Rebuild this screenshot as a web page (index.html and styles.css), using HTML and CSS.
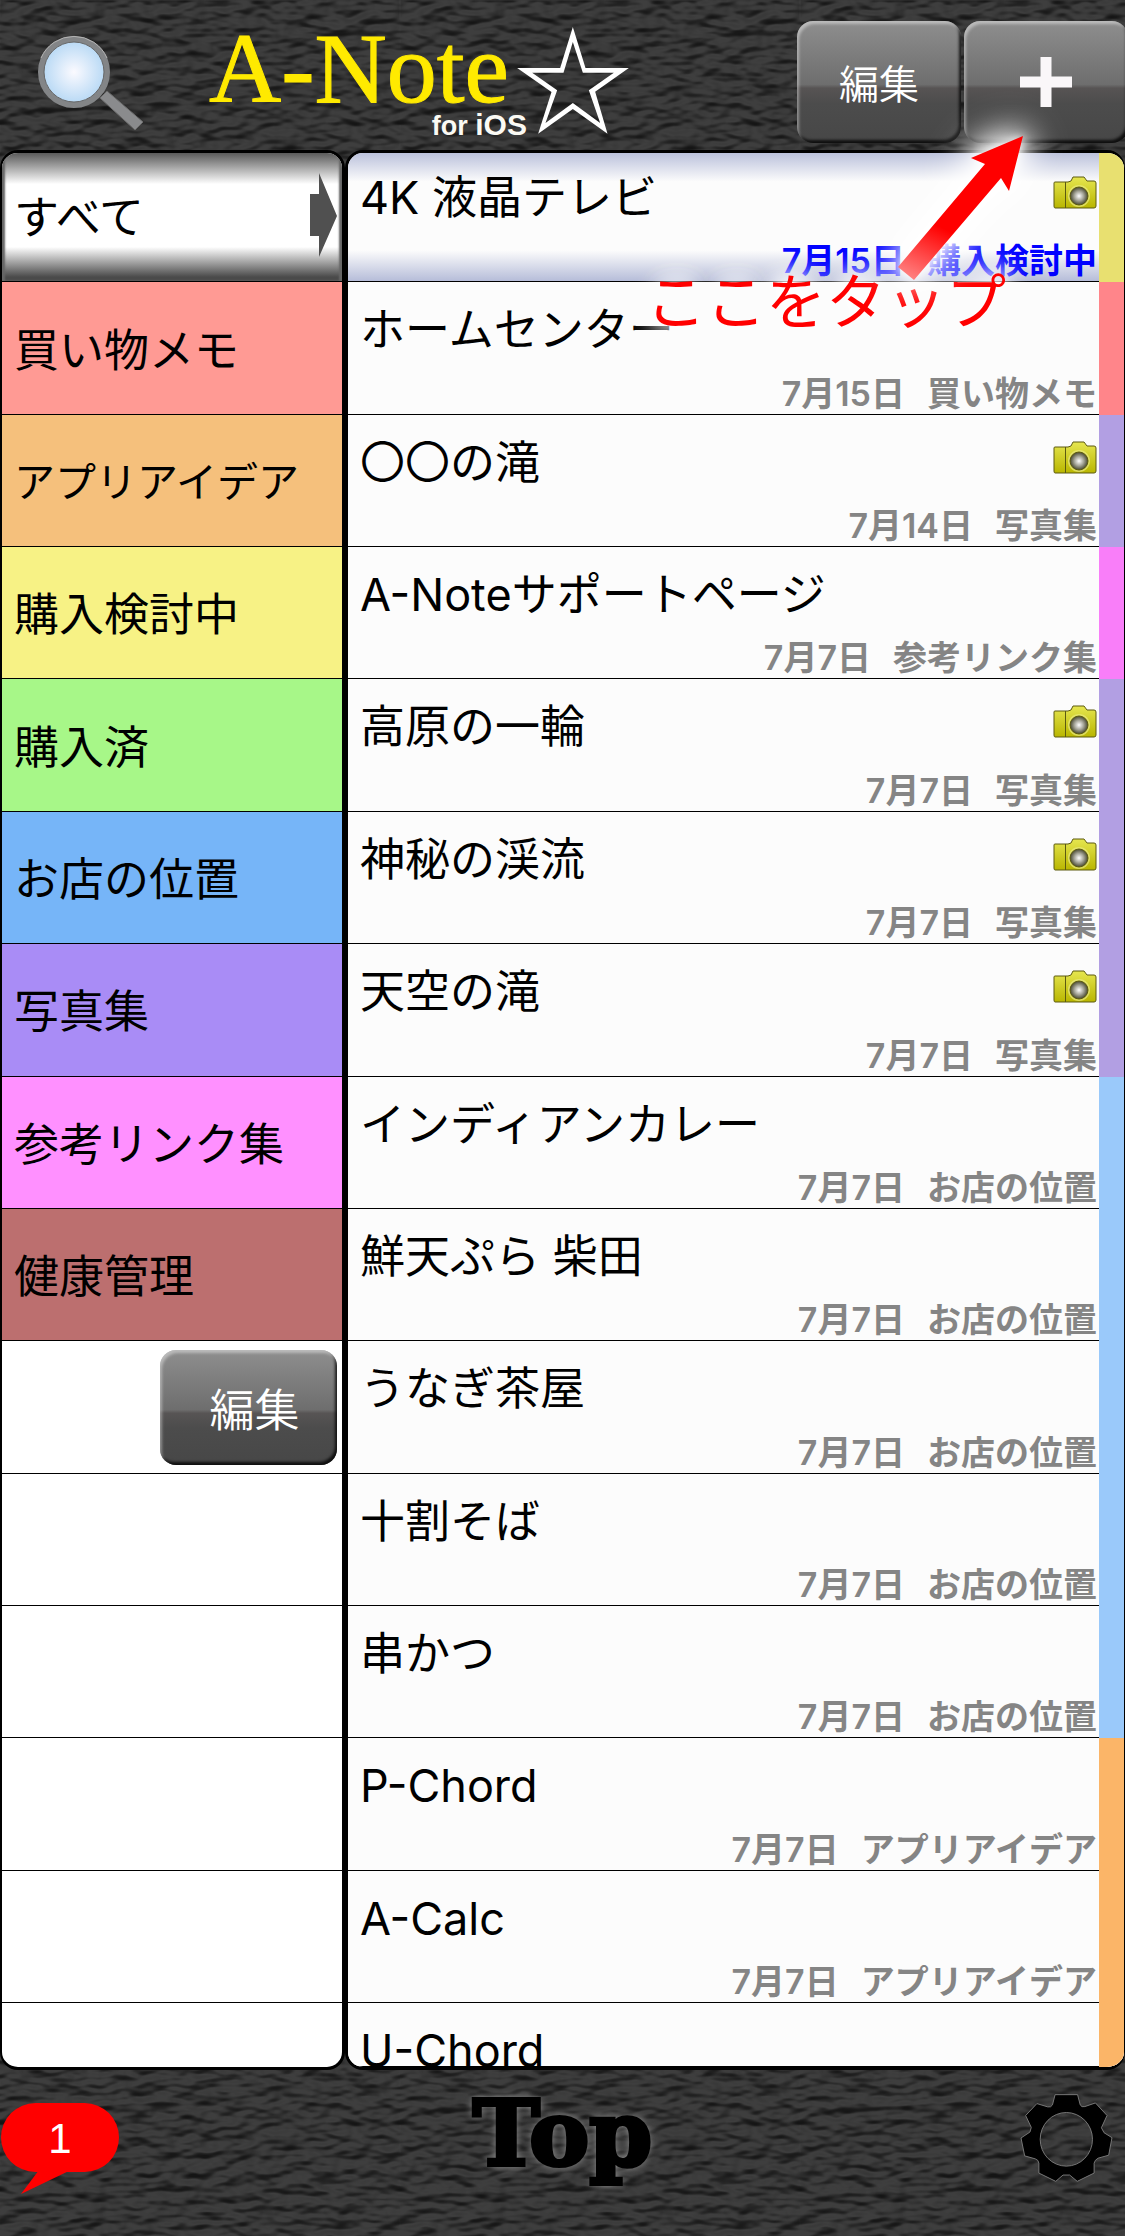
FILE: index.html
```html
<!DOCTYPE html>
<html lang="ja">
<head>
    <meta charset="UTF-8">
    <meta name="viewport" content="width=device-width, initial-scale=1.0">
    <title>A-Note for iOS</title>
    <link rel="stylesheet" href="styles.css">
</head>
<body>
    <svg class="defs" width="0" height="0" aria-hidden="true">
        <defs>
            <linearGradient id="cam-body" x1="0" y1="0" x2="0" y2="1">
                <stop offset="0" stop-color="#e6e650"/>
                <stop offset="1" stop-color="#b9b600"/>
            </linearGradient>
            <radialGradient id="cam-lens">
                <stop offset="0" stop-color="#fff"/>
                <stop offset="0.5" stop-color="#a8a89c"/>
                <stop offset="1" stop-color="#45452c"/>
            </radialGradient>
            <symbol id="camera" viewBox="0 0 44 33">
                <path d="M2 6h13l3-1 2-4h11l3 4h7q2 0 2 2v23q0 2-2 2H2q-1 0-1-2V7q0-1 1-1z" fill="url(#cam-body)" stroke="#5c5a10" stroke-width="1"/>
                <path d="M12.500 6v26" stroke="#5c5a10" stroke-width="1"/>
                <circle cx="26" cy="20" r="11" fill="#e9e980" opacity=".7"/>
                <circle cx="26" cy="20" r="9" fill="url(#cam-lens)" stroke="#5c5a10" stroke-width="1"/>
            </symbol>
        </defs>
    </svg>

    <header class="header">
        <button class="search-button" aria-label="検索">
            <svg width="110" height="100" viewBox="0 0 110 100">
                <defs>
                    <radialGradient id="glass">
                        <stop offset="0" stop-color="#fbfaff"/>
                        <stop offset="1" stop-color="#b4d7f4"/>
                    </radialGradient>
                </defs>
                <path d="M66 64l7-7 36 31-8 8z" fill="#8a8b8d" stroke="#6a6a6a" stroke-width="1"/>
                <circle cx="40" cy="38" r="33" fill="url(#glass)" stroke="#838587" stroke-width="6"/>
                <path d="M7 24a36 36 0 0 1 66 0" fill="none" stroke="#b4b4b4" stroke-width="1"/>
                <circle cx="40" cy="38" r="30" fill="none" stroke="#666" stroke-width="1"/>
            </svg>
        </button>
        <h1 class="logo">
            <span class="logo-text">
                <span class="logo-name">A-Note</span>
                <span class="logo-sub">for <b>iOS</b></span>
            </span>
            <svg class="star" width="112" height="107" viewBox="427 80 335 321" aria-hidden="true">
                <path fill="#fff" fill-rule="evenodd" d="M594 80L632 203H762L661 274L698 400L594 326L490 400L530 275L427 203H556ZM594 125L624 217H717L642 270L676 368L594 308L512 368L547 270L472 217H566Z"/>
            </svg>
        </h1>
        <div class="header-buttons">
            <button class="btn">編集</button>
            <button class="btn btn-add" aria-label="新規メモ">
                <svg width="52" height="50" viewBox="0 0 52 50"><path d="M0 25h52M26 0v50" stroke="#faf7f9" stroke-width="11"/></svg>
            </button>
        </div>
        <div class="guide">
            <svg class="guide-arrow" width="132" height="150" viewBox="894 132 132 150" aria-hidden="true">
                <defs>
                    <linearGradient id="arrow-fade" gradientUnits="userSpaceOnUse" x1="930" y1="222" x2="905" y2="275">
                        <stop offset="0" stop-color="#f00"/>
                        <stop offset="1" stop-color="#ff8080"/>
                    </linearGradient>
                </defs>
                <path d="M1023 136L971 158L985 164L898 267L914 280L1001 178L1009 191Z" fill="url(#arrow-fade)"/>
            </svg>
            <p class="guide-text">ここをタップ</p>
        </div>
    </header>

    <main class="panels">
        <nav class="panel categories">
            <a href="#" class="row all">すべて
                <svg class="pointer" width="27" height="84" viewBox="0 0 27 84" aria-hidden="true"><path d="M0 21h9V0l18 43L9 84V63H0z" fill="#505050"/></svg>
            </a>
            <a href="#" class="row red">買い物メモ</a>
            <a href="#" class="row orange long">アプリアイデア</a>
            <a href="#" class="row yellow">購入検討中</a>
            <a href="#" class="row green">購入済</a>
            <a href="#" class="row blue">お店の位置</a>
            <a href="#" class="row purple">写真集</a>
            <a href="#" class="row pink">参考リンク集</a>
            <a href="#" class="row brown">健康管理</a>
            <div class="row edit-row"><button class="btn">編集</button></div>
            <div class="row"></div>
            <div class="row"></div>
            <div class="row"></div>
            <div class="row"></div>
            <div class="row"></div>
        </nav>

        <section class="panel notes">
            <a href="#" class="row selected tag-yellow">
                <span class="title">4K 液晶テレビ</span><svg class="camera"><use href="#camera"/></svg>
                <span class="meta"><span>7月15日</span><span>購入検討中</span></span>
            </a>
            <a href="#" class="row tag-red">
                <span class="title">ホームセンター</span>
                <span class="meta"><span>7月15日</span><span>買い物メモ</span></span>
            </a>
            <a href="#" class="row tag-purple">
                <span class="title">〇〇の滝</span><svg class="camera"><use href="#camera"/></svg>
                <span class="meta"><span>7月14日</span><span>写真集</span></span>
            </a>
            <a href="#" class="row tag-pink">
                <span class="title">A-Noteサポートページ</span>
                <span class="meta"><span>7月7日</span><span>参考リンク集</span></span>
            </a>
            <a href="#" class="row tag-purple">
                <span class="title">高原の一輪</span><svg class="camera"><use href="#camera"/></svg>
                <span class="meta"><span>7月7日</span><span>写真集</span></span>
            </a>
            <a href="#" class="row tag-purple">
                <span class="title">神秘の渓流</span><svg class="camera"><use href="#camera"/></svg>
                <span class="meta"><span>7月7日</span><span>写真集</span></span>
            </a>
            <a href="#" class="row tag-purple">
                <span class="title">天空の滝</span><svg class="camera"><use href="#camera"/></svg>
                <span class="meta"><span>7月7日</span><span>写真集</span></span>
            </a>
            <a href="#" class="row tag-blue">
                <span class="title">インディアンカレー</span>
                <span class="meta"><span>7月7日</span><span>お店の位置</span></span>
            </a>
            <a href="#" class="row tag-blue">
                <span class="title">鮮天ぷら 柴田</span>
                <span class="meta"><span>7月7日</span><span>お店の位置</span></span>
            </a>
            <a href="#" class="row tag-blue">
                <span class="title">うなぎ茶屋</span>
                <span class="meta"><span>7月7日</span><span>お店の位置</span></span>
            </a>
            <a href="#" class="row tag-blue">
                <span class="title">十割そば</span>
                <span class="meta"><span>7月7日</span><span>お店の位置</span></span>
            </a>
            <a href="#" class="row tag-blue">
                <span class="title">串かつ</span>
                <span class="meta"><span>7月7日</span><span>お店の位置</span></span>
            </a>
            <a href="#" class="row tag-orange">
                <span class="title">P-Chord</span>
                <span class="meta"><span>7月7日</span><span>アプリアイデア</span></span>
            </a>
            <a href="#" class="row tag-orange">
                <span class="title">A-Calc</span>
                <span class="meta"><span>7月7日</span><span>アプリアイデア</span></span>
            </a>
            <a href="#" class="row tag-orange">
                <span class="title">U-Chord</span>
            </a>
        </section>
    </main>

    <footer class="footer">
        <a href="#" class="bubble">1</a>
        <a href="#" class="top-link">Top</a>
        <button class="settings" aria-label="設定">
            <svg width="93" height="90" viewBox="812 340 281 272">
                <path fill="#000" fill-rule="evenodd" stroke="#777" stroke-width="3" d="M918 345H986L994 376Q998 384 1008 381L1040 370L1075 408L1058 445L1066 460L1090 475L1080 528L1048 537Q1038 542 1036 552V582L985 607L962 588H942L920 607L869 582V552Q868 542 858 539L826 530L815 476L842 458L846 444L829 408L863 372L896 382Q906 384 910 376ZM952 399A79 81 0 1 0 952 561A79 81 0 1 0 952 399Z"/>
            </svg>
        </button>
    </footer>
</body>
</html>
```
FILE: styles.css
```css
* { box-sizing: border-box; }

body {
    margin: 0;
    min-height: 100vh;
    display: flex;
    flex-direction: column;
    font-family: Inter, "Noto Sans CJK JP", sans-serif;
    font-size: 45px;
    color: #000;
    background-color: #333;
    background-image: url("data:image/svg+xml,%3Csvg xmlns='http://www.w3.org/2000/svg' width='400' height='400'%3E%3Cfilter id='n' x='0' y='0' width='100%25' height='100%25' color-interpolation-filters='sRGB'%3E%3CfeTurbulence type='fractalNoise' baseFrequency='.04 .09' numOctaves='2' seed='4' stitchTiles='stitch'/%3E%3CfeDiffuseLighting surfaceScale='9' lighting-color='%23444444'%3E%3CfeDistantLight azimuth='260' elevation='58'/%3E%3C/feDiffuseLighting%3E%3C/filter%3E%3Crect width='400' height='400' fill='%23353535'/%3E%3Crect width='400' height='400' filter='url(%23n)' opacity='.6'/%3E%3C/svg%3E");
}

a { color: inherit; text-decoration: none; }
button { font-family: inherit; cursor: pointer; }
.defs { position: absolute; }

/* header */
.header {
    position: relative;
    height: 150px;
    display: flex;
    align-items: flex-start;
}
.search-button, .settings {
    padding: 0;
    border: 0;
    background: none;
}
.search-button { margin: 34px 0 0 34px; }
.search-button svg, .settings svg { display: block; }

.logo {
    display: flex;
    align-items: flex-start;
    margin: 0 0 0 65px;
    font-weight: normal;
}
.logo-text { display: flex; flex-direction: column; }
.logo-name {
    font-family: "Liberation Serif", serif;
    font-size: 100px;
    line-height: 100px;
    margin-top: 19px;
    color: #ffea00;
    -webkit-text-stroke: 1px #ffea00;
}
.logo-sub {
    margin: -10px -18px 0 0;
    text-align: right;
    font: bold 27px/32px "Liberation Sans", sans-serif;
    color: #fbfaf4;
}
.logo-sub b { font-size: 30px; }
.star { margin: 27px 0 0 8px; }

.header-buttons {
    display: flex;
    gap: 3px;
    margin: 21px -3px 0 auto;
}
.btn {
    width: 164px;
    height: 122px;
    padding: 0;
    border: 0;
    border-radius: 16px;
    font-size: 40px;
    font-weight: 350;
    color: #fff;
    background: linear-gradient(#8e8e8e, #6e6e6e 52%, #575454 55%, #4c4c4c 68%, #474747);
    box-shadow: inset 2px 3px 3px rgba(255, 255, 255, .4), inset -2px -3px 3px rgba(0, 0, 0, .8);
}
.btn-add svg { display: block; margin: 0 auto; }

/* "tap here" callout over the list */
.guide {
    position: absolute;
    z-index: 2;
    top: 132px;
    right: 99px;
    pointer-events: none;
}
.guide-arrow {
    display: block;
    margin-left: auto;
    overflow: visible;
    filter: drop-shadow(0 0 5px #fff) drop-shadow(0 0 16px #fff) drop-shadow(0 0 16px #fff);
}
.guide-text {
    margin: -20px 20px 0 0;
    font-size: 60px;
    line-height: 80px;
    font-weight: 400;
    color: #f00;
    text-shadow: 0 0 16px #fff, 0 0 24px #fff, 0 0 30px #fff, 0 0 30px #fff, 0 0 36px #fff;
}

/* lists */
.panels {
    flex: 1;
    display: grid;
    grid-template-columns: 345px 1fr;
}
.panel {
    display: flex;
    flex-direction: column;
    overflow: hidden;
    border: 3px solid #000;
    border-radius: 18px;
    background: #fff;
}
.categories { border-left-width: 2px; }
.notes { border-right-width: 1px; background: #fcfcfc; }

.row {
    flex: 1 0 0;
    min-height: 120px;
    border-bottom: 1px solid #000;
}
.row:first-child { margin-top: -3px; }
.row:last-child {
    flex: 0 0 64px;
    min-height: 0;
    border-bottom: 0;
    overflow: hidden;
}

.categories .row {
    display: flex;
    align-items: center;
    padding: 0 0 2px 12px;
}
.categories .long { font-size: 41px; }
.categories .all {
    justify-content: space-between;
    padding-right: 5px;
    background: linear-gradient(#4a4a4a, #fff 26%, #fff 74%, #4a4a4a 97%);
    box-shadow: inset 3px 0 2px #666, inset -3px 0 2px #666;
}
.categories .edit-row {
    justify-content: flex-end;
    padding: 2px 5px 0 0;
}
.edit-row .btn {
    width: 177px;
    height: 115px;
    padding-left: 12px;
    font-size: 45px;
}
.red { background: #ff9a94; }
.orange { background: #f5c07c; }
.yellow { background: #f7f285; }
.green { background: #a7f788; }
.blue { background: #76b5f8; }
.purple { background: #a98cf6; }
.pink { background: #ff90ff; }
.brown { background: #bc6f6f; }

.notes .row {
    display: grid;
    grid-template-columns: 1fr auto;
    grid-template-rows: 84px 1fr;
    padding: 0 2px 0 12px;
    border-right: 25px solid;
    border-right-color: var(--tag);
    background: #fcfcfc;
    border-bottom: 0;
    box-shadow: inset 0 -1px #000;
}
.notes .selected {
    background: linear-gradient(#b4bbd8, #fcfcfc 24%, #fcfcfc 76%, #b4bbd8);
}
.title {
    padding-top: 15px;
    line-height: 66px;
}
.camera {
    width: 44px;
    height: 33px;
    margin-top: 26px;
}
.meta {
    grid-column: 1 / -1;
    display: flex;
    justify-content: flex-end;
    gap: 22px;
    align-self: end;
    padding-bottom: 1px;
    font-size: 34px;
    line-height: 40px;
    font-weight: 600;
    color: #858585;
}
.selected .meta { color: #00f; }

.tag-yellow { --tag: #e8e070; }
.tag-red { --tag: #ff858a; }
.tag-purple { --tag: #b29fe3; }
.tag-pink { --tag: #f97ef9; }
.tag-blue { --tag: #9ac9fa; }
.tag-orange { --tag: #fbb568; }

/* footer */
.footer {
    height: 166px;
    display: grid;
    grid-template-columns: 1fr auto 1fr;
    align-items: start;
}
.bubble {
    position: relative;
    width: 118px;
    height: 69px;
    margin: 33px 0 0 1px;
    border-radius: 35px;
    background: #f00;
    color: #fff;
    text-align: center;
    font: 42px/71px "Liberation Sans", sans-serif;
}
.bubble::after {
    content: "";
    position: absolute;
    left: 20px;
    top: 66px;
    width: 52px;
    height: 25px;
    background: #f00;
    clip-path: polygon(0 100%, 36% 0, 100% 0);
}
.top-link {
    margin-top: 13px;
    font: bold 90px/100px "DejaVu Serif", serif;
    -webkit-text-stroke: 4px #000;
    text-shadow: 0 0 10px #bbb;
}
.settings {
    justify-self: end;
    margin: 23px 12px 0 0;
}
```
